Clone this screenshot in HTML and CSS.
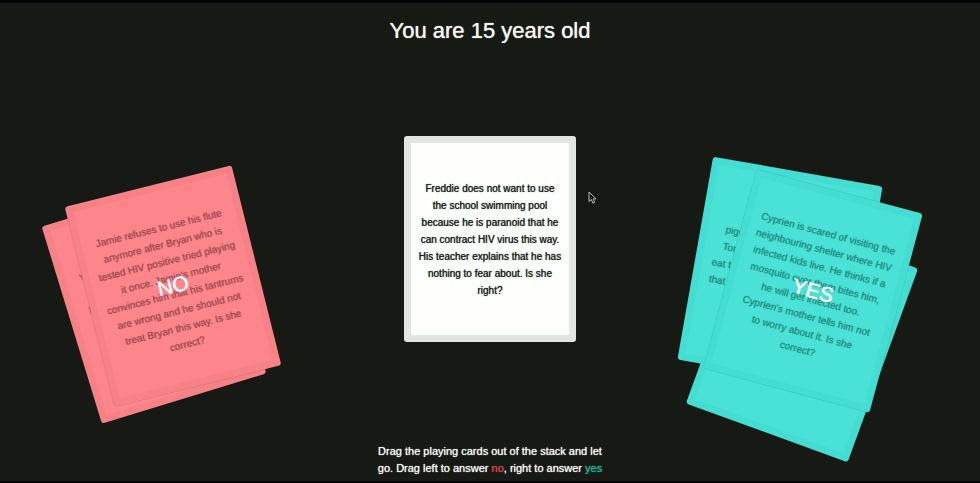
FILE: index.html
```html
<!DOCTYPE html>
<html lang="en">
<head>
<meta charset="utf-8">
<meta name="viewport" content="width=device-width, initial-scale=1">
<title>You are 15 years old</title>
<link rel="stylesheet" href="styles.css">
</head>
<body>
<header class="header">
  <h1 class="title">You are 15 years old</h1>
</header>
<main class="stage">
  <article class="card answered no no-first">
    <p class="question partial"><span class="indent-small">Y</span><br><br><span class="indent-small">h</span><br><span class="indent-small">a</span><br><br><br></p>
  </article>
  <article class="card answered no no-second">
    <p class="question">Jamie refuses to use his flute<br>anymore after Bryan who is<br>tested HIV positive tried playing<br>it once. Jamie's mother<br>convinces him that his tantrums<br>are wrong and he should not<br>treat Bryan this way. Is she<br>correct?</p>
    <strong class="verdict">NO</strong>
  </article>

  <article class="card answered yes yes-first"></article>
  <article class="card answered yes yes-second">
    <p class="question partial"><span class="indent-large">A</span><br><span class="indent">pigm</span><br><span class="indent">Ton</span><br>eat t<br>that<br><span class="indent-medium">i</span><br><br></p>
  </article>
  <article class="card answered yes yes-third">
    <p class="question">Cyprien is scared of visiting the<br>neighbouring shelter where HIV<br>infected kids live. He thinks if a<br>mosquito over them bites him,<br>he will get infected too.<br>Cyprien's mother tells him not<br>to worry about it. Is she<br>correct?</p>
    <strong class="verdict">YES</strong>
  </article>

  <article class="card current">
    <p class="question">Freddie does not want to use<br>the school swimming pool<br>because he is paranoid that he<br>can contract HIV virus this way.<br>His teacher explains that he has<br>nothing to fear about. Is she<br>right?</p>
  </article>
  <svg class="pointer" width="9" height="13" viewBox="0 0 9 13" aria-hidden="true">
    <path d="M1 1v9.5l2.3-2 1.6 3.7 1.8-.8-1.6-3.5h3z" fill="#111" stroke="#b9bbb8" stroke-width="1"/>
  </svg>
</main>
<footer class="footer">
  <p class="hint">Drag the playing cards out of the stack and let<br>go. Drag left to answer <span class="word-no">no</span>, right to answer <span class="word-yes">yes</span></p>
</footer>
</body>
</html>
```
FILE: styles.css
```css
* {
  box-sizing: border-box;
}

body {
  margin: 0;
  min-height: 100vh;
  display: flex;
  flex-direction: column;
  overflow: hidden;
  border-top: 3px solid #000;
  border-bottom: 2px solid #000;
  background: #171a14;
  color: #f4f6f2;
  font-family: "Liberation Sans", Arial, sans-serif;
  text-shadow: 0 0 1px currentColor;
}

.header {
  padding-top: 14px;
  text-align: center;
}

.title {
  margin: 0;
  font-size: 22px;
  font-weight: 400;
  line-height: 28px;
}

.stage {
  position: relative;
  flex: 1;
  display: flex;
  align-items: center;
  justify-content: center;
}

.card {
  width: 172px;
  min-height: 206px;
  display: flex;
  align-items: center;
  justify-content: center;
  border: 7px solid #e3e5e2;
  border-radius: 3px;
  background: #fcfffb;
  color: #222;
}

.question {
  margin: 0;
  font-size: 10px;
  line-height: 17px;
  text-align: center;
  white-space: nowrap;
}

/* Answered cards are scattered freely around the current card. */
.answered {
  position: absolute;
  left: calc(50% + var(--x));
  top: calc(50% + var(--y));
  transform: translate(-50%, -50%) rotate(var(--tilt));
}

.no {
  border-color: #f68187;
  background: #fc868b;
  color: #a54d53;
}

.yes {
  border-color: #44ddd1;
  background: #4ae2d6;
  color: #258f89;
}

.no-first { --x: -336px; --y: 61px; --tilt: -17deg; }
.no-second { --x: -317px; --y: 47px; --tilt: -14deg; }
.yes-first { --x: 312px; --y: 97px; --tilt: 20deg; }
.yes-second { --x: 290px; --y: 34px; --tilt: 10deg; }
.yes-third { --x: 323px; --y: 52px; --tilt: 15deg; }

.no-second,
.yes-third {
  box-shadow: 0 0 1px rgba(0, 0, 0, 0.3);
}

.partial {
  width: 100%;
  padding-left: 10px;
  text-align: left;
}

.indent-small { padding-left: 4px; }
.indent { padding-left: 8px; }
.indent-medium { padding-left: 16px; }
.indent-large { padding-left: 24px; }

.verdict {
  position: absolute;
  inset: 0;
  display: flex;
  align-items: center;
  justify-content: center;
  color: #fff;
  font-size: 21px;
  font-weight: 400;
}

.pointer {
  position: absolute;
  left: calc(50% + 98px);
  top: calc(50% - 48px);
}

.footer {
  padding: 10px 0 4px;
  text-align: center;
}

.hint {
  margin: 0;
  font-size: 11px;
  line-height: 17px;
}

.word-no { color: #d8404a; }
.word-yes { color: #1fb5a5; }
```
